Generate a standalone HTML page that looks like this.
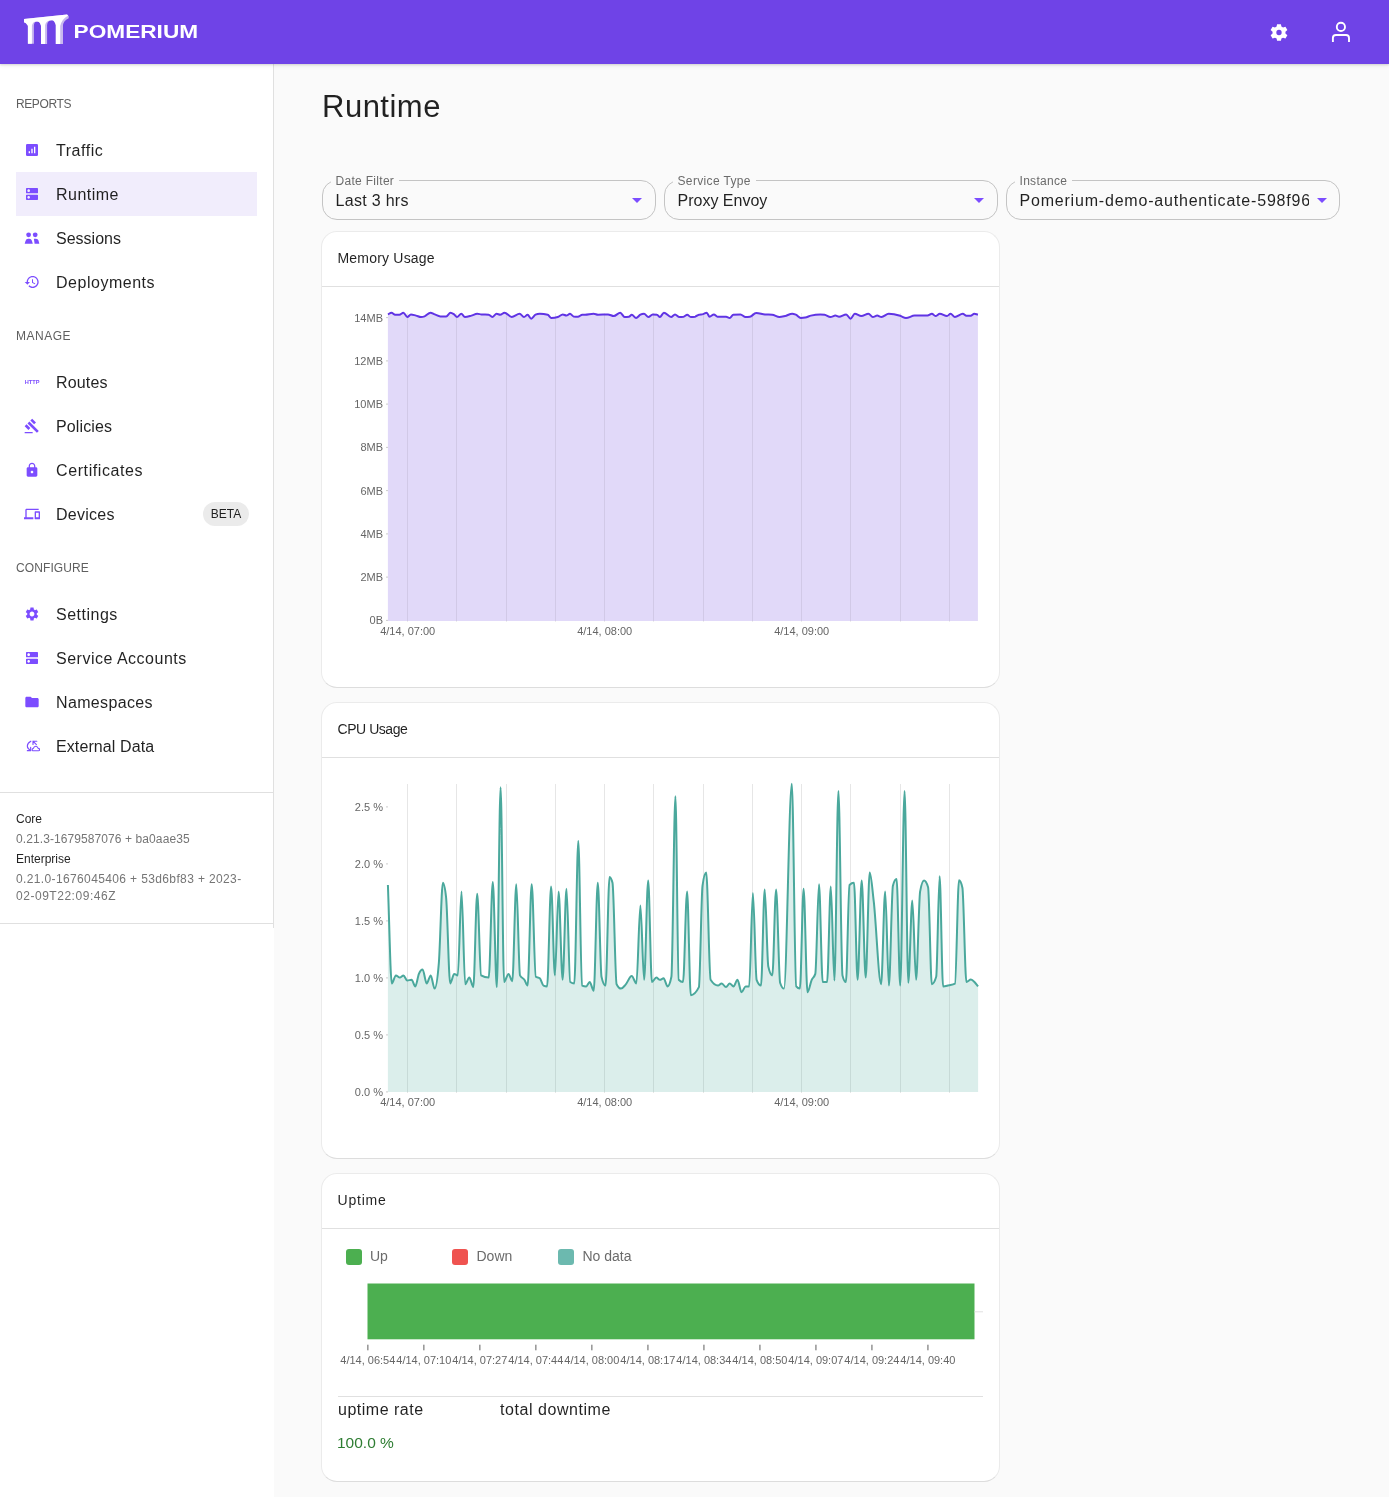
<!DOCTYPE html>
<html><head><meta charset="utf-8">
<style>
*{box-sizing:border-box;margin:0;padding:0}
html,body{width:1389px;height:1497px;overflow:hidden;background:#fff;font-family:"Liberation Sans",sans-serif;color:rgba(0,0,0,0.87)}
#wrap{position:absolute;left:0;top:0;width:1389px;height:1497px;will-change:transform;background:#fff}
.abs{position:absolute}
#main{position:absolute;left:274px;top:64px;width:1115px;height:1433px;background:#fafafa}
#hdr{position:absolute;left:0;top:0;width:1389px;height:64px;background:#6F43E7;box-shadow:0 1px 2px rgba(0,0,0,0.13),0 2px 5px rgba(0,0,0,0.06);z-index:5}
#side{position:absolute;left:0;top:64px;width:274px;height:864px;background:#fff;border-right:1px solid #e0e0e0}
.sec{position:absolute;left:16px;font-size:12px;color:#5f5f5f;letter-spacing:0.1px;line-height:14px}
.item{position:absolute;left:16px;width:241px;height:44px}
.item.sel{background:#f1edfc}
.item svg{position:absolute;left:8px;top:14px;width:16px;height:16px}
.item span{position:absolute;left:40px;top:1px;line-height:44px;font-size:16px;color:rgba(0,0,0,0.87);white-space:nowrap}
.chip{position:absolute;left:187px;top:10px;width:46px;height:24px;border-radius:12px;background:#ebebeb;font-size:12px;line-height:25px;text-align:center;color:rgba(0,0,0,0.87)}
.ver{position:absolute;left:16px;font-size:12px;white-space:nowrap}
.field{position:absolute;top:180px;height:40px;border:1px solid #c4c4c4;border-radius:15px;width:334px;background:#fafafa}
.field .lab{position:absolute;top:-7.5px;left:7.5px;padding:0 5px;letter-spacing:.1px;background:#fafafa;font-size:12px;line-height:14px;color:#6b6b6b;white-space:nowrap}
.field .val{position:absolute;left:12.5px;top:11px;font-size:16px;line-height:18px;white-space:nowrap;overflow:hidden;color:rgba(0,0,0,0.87)}
.field .arr{position:absolute;top:17px;width:0;height:0;border-left:5px solid transparent;border-right:5px solid transparent;border-top:5px solid #7C4DFF}
.card{position:absolute;left:321px;width:679px;background:#fff;border:1px solid #ebebeb;border-bottom-color:#dddddd;border-radius:16px}
.card .ttl{position:absolute;left:15.5px;top:18px;font-size:14px;line-height:16px;color:rgba(0,0,0,0.87)}
.card .dv{position:absolute;left:0;right:0;top:54px;height:1px;background:#e0e0e0}
svg.full{position:absolute;left:0;top:0;width:1389px;height:1497px;z-index:3;pointer-events:none}
.ax{font-family:"Liberation Sans",sans-serif;font-size:11px;fill:#666}
</style></head><body><div id="wrap">
<div id="main"></div>
<div id="hdr">
  <svg class="abs" style="left:0;top:0" width="220" height="64" viewBox="0 0 220 64">
    <path d="M24,19 L67,14.4 L68.7,16 L68.7,18.3 Q63,21 63,26 L63,44 L55.8,44 L55.8,25 Q54.5,20.3 52,20.3 Q47.5,20.3 47.1,25 L47.1,44 L41,44 L41,25.8 Q40,21.5 37,21.5 Q34,21.5 33.9,25.8 L33.9,43.7 L27.9,43.7 L27.9,25.8 Q26,22.3 24,22.3 Z" fill="#c8b8ef"/>
    <path d="M24,19 L67,14.4 L68.2,15.6 Q62,19 60.2,26 L60.2,44 L55.8,44 L55.8,25 Q54.5,20.3 52,20.3 Q46,20.3 45.1,25 L45.1,44 L41,44 L41,25.8 Q40,21.5 37,21.5 Q32.5,21.5 31.9,25.8 L31.9,43.7 L27.9,43.7 L27.9,25.8 Q26,22.3 24,22.3 Z" fill="#fff"/>
    <text x="73.6" y="37.9" font-family="Liberation Sans" font-weight="bold" font-size="17.6" fill="#fff" textLength="124.5" lengthAdjust="spacingAndGlyphs">POMERIUM</text>
  </svg>
  <svg class="abs" style="left:1266px;top:20px" width="26" height="26" viewBox="0 0 26 26">
    <path fill="#fff" fill-rule="evenodd" d="M10.9,3.9 L15.1,3.9 L15.6,6.6 L17.4,7.6 L20,6.7 L22.1,10.3 L20,12.1 L20,14.1 L22.1,15.9 L20,19.5 L17.4,18.6 L15.6,19.6 L15.1,22.1 L10.9,22.1 L10.4,19.6 L8.6,18.6 L6,19.5 L3.9,15.9 L6,14.1 L6,12.1 L3.9,10.3 L6,6.7 L8.6,7.6 L10.4,6.6 Z M13,10.1 A2.9,2.9 0 1,0 13,15.9 A2.9,2.9 0 1,0 13,10.1 Z" transform="translate(13,12.5) scale(0.92) translate(-13,-13)"/>
  </svg>
  <svg class="abs" style="left:1326px;top:15px" width="30" height="30" viewBox="0 0 30 30">
    <circle cx="14.9" cy="11.9" r="4.1" fill="none" stroke="#fff" stroke-width="1.9"/>
    <path d="M6.9,27 L6.9,23 Q6.9,20 10,20 L20,20 Q23,20 23,23 L23,27" fill="none" stroke="#fff" stroke-width="1.9"/>
  </svg>
</div>

<div id="side">
  <div class="sec" style="top:33px;letter-spacing:-.4px">REPORTS</div>
  <div class="item" style="top:64px"><svg viewBox="0 0 24 24"><rect x="3" y="3" width="18" height="18" rx="2" fill="#7C4DFF"/><path d="M7 17h2v-3H7zM11 17h2V10h-2zM15 17h2V7h-2z" fill="#fff"/></svg><span style="letter-spacing:.55px">Traffic</span></div>
  <div class="item sel" style="top:108px"><svg viewBox="0 0 24 24"><path fill="#7C4DFF" d="M20 13H4c-.55 0-1 .45-1 1v6c0 .55.45 1 1 1h16c.55 0 1-.45 1-1v-6c0-.55-.45-1-1-1zM7 19c-1.1 0-2-.9-2-2s.9-2 2-2 2 .9 2 2-.9 2-2 2zM20 3H4c-.55 0-1 .45-1 1v6c0 .55.45 1 1 1h16c.55 0 1-.45 1-1V4c0-.55-.45-1-1-1zM7 9c-1.1 0-2-.9-2-2s.9-2 2-2 2 .9 2 2-.9 2-2 2z"/></svg><span style="letter-spacing:.48px">Runtime</span></div>
  <div class="item" style="top:152px"><svg viewBox="0 0 16 16"><g fill="#7C4DFF"><circle cx="4.6" cy="4.8" r="2.4"/><circle cx="11.2" cy="4.8" r="2.4"/><path d="M0.7,13.7 L1.5,11 Q2.1,8.7 4.2,8.7 L5.4,8.7 Q7.3,8.7 7.9,10.8 L8.8,13.7 Z"/><path d="M9.9,8.8 L12,8.7 Q14,8.7 14.6,10.7 L15.3,13.7 L10.6,13.7 Z"/></g></svg><span>Sessions</span></div>
  <div class="item" style="top:196px"><svg viewBox="0 0 24 24"><path fill="#7C4DFF" d="M13 3c-4.97 0-9 4.03-9 9H1l3.89 3.89.07.14L9 12H6c0-3.87 3.13-7 7-7s7 3.13 7 7-3.13 7-7 7c-1.93 0-3.68-.79-4.94-2.06l-1.42 1.42C8.27 19.99 10.51 21 13 21c4.97 0 9-4.03 9-9s-4.03-9-9-9zm-1 5v5l4.28 2.54.72-1.21-3.5-2.08V8H12z"/></svg><span style="letter-spacing:.52px">Deployments</span></div>

  <div class="sec" style="top:265px;letter-spacing:.5px">MANAGE</div>
  <div class="item" style="top:296px"><svg viewBox="0 0 24 24"><text x="1.1" y="14.9" font-family="Liberation Sans" font-weight="bold" font-size="9.4" fill="#7C4DFF" textLength="22" lengthAdjust="spacingAndGlyphs">HTTP</text></svg><span style="letter-spacing:.15px">Routes</span></div>
  <div class="item" style="top:340px"><svg viewBox="0 0 24 24"><path fill="#7C4DFF" d="M1 21h12v2H1zM5.245 8.07l2.83-2.827 14.14 14.142-2.828 2.828zM12.317 1l5.657 5.656-2.83 2.83-5.654-5.66zM3.825 9.485l5.657 5.657-2.828 2.828-5.657-5.657z"/></svg><span style="letter-spacing:.12px">Policies</span></div>
  <div class="item" style="top:384px"><svg viewBox="0 0 24 24"><path fill="#7C4DFF" d="M18 8h-1V6c0-2.76-2.24-5-5-5S7 3.24 7 6v2H6c-1.1 0-2 .9-2 2v10c0 1.1.9 2 2 2h12c1.1 0 2-.9 2-2V10c0-1.1-.9-2-2-2zm-6 9c-1.1 0-2-.9-2-2s.9-2 2-2 2 .9 2 2-.9 2-2 2zm3.1-9H8.9V6c0-1.71 1.39-3.1 3.1-3.1 1.71 0 3.1 1.39 3.1 3.1v2z"/></svg><span style="letter-spacing:.6px">Certificates</span></div>
  <div class="item" style="top:428px"><svg viewBox="0 0 24 24"><path fill="#7C4DFF" d="M4 6h18V4H4c-1.1 0-2 .9-2 2v11H0v3h14v-3H4V6zm19 2h-6c-.55 0-1 .45-1 1v10c0 .55.45 1 1 1h6c.55 0 1-.45 1-1V9c0-.55-.45-1-1-1zm-1 9h-4v-7h4v7z"/></svg><span style="letter-spacing:.25px">Devices</span><div class="chip">BETA</div></div>

  <div class="sec" style="top:497px">CONFIGURE</div>
  <div class="item" style="top:528px"><svg viewBox="0 0 24 24"><path fill="#7C4DFF" d="M19.14 12.94c.04-.3.06-.61.06-.94 0-.32-.02-.64-.07-.94l2.03-1.58c.18-.14.23-.41.12-.61l-1.92-3.32c-.12-.22-.37-.29-.59-.22l-2.39.96c-.5-.38-1.03-.7-1.62-.94l-.36-2.54c-.04-.24-.24-.41-.48-.41h-3.84c-.24 0-.43.17-.47.41l-.36 2.54c-.59.24-1.13.57-1.62.94l-2.39-.96c-.22-.08-.47 0-.59.22L2.74 8.87c-.12.21-.08.47.12.61l2.03 1.58c-.05.3-.09.63-.09.94s.02.64.07.94l-2.03 1.58c-.18.14-.23.41-.12.61l1.92 3.32c.12.22.37.29.59.22l2.39-.96c.5.38 1.03.7 1.62.94l.36 2.54c.05.24.24.41.48.41h3.84c.24 0 .44-.17.47-.41l.36-2.54c.59-.24 1.13-.56 1.62-.94l2.39.96c.22.08.47 0 .59-.22l1.92-3.32c.12-.22.07-.47-.12-.61l-2.01-1.58zM12 15.6c-1.98 0-3.6-1.62-3.6-3.6s1.62-3.6 3.6-3.6 3.6 1.62 3.6 3.6-1.62 3.6-3.6 3.6z"/></svg><span style="letter-spacing:.5px">Settings</span></div>
  <div class="item" style="top:572px"><svg viewBox="0 0 24 24"><path fill="#7C4DFF" d="M20 13H4c-.55 0-1 .45-1 1v6c0 .55.45 1 1 1h16c.55 0 1-.45 1-1v-6c0-.55-.45-1-1-1zM7 19c-1.1 0-2-.9-2-2s.9-2 2-2 2 .9 2 2-.9 2-2 2zM20 3H4c-.55 0-1 .45-1 1v6c0 .55.45 1 1 1h16c.55 0 1-.45 1-1V4c0-.55-.45-1-1-1zM7 9c-1.1 0-2-.9-2-2s.9-2 2-2 2 .9 2 2-.9 2-2 2z"/></svg><span style="letter-spacing:.5px">Service Accounts</span></div>
  <div class="item" style="top:616px"><svg viewBox="0 0 24 24"><path fill="#7C4DFF" d="M10 4H4c-1.1 0-1.99.9-1.99 2L2 18c0 1.1.9 2 2 2h16c1.1 0 2-.9 2-2V8c0-1.1-.9-2-2-2h-8l-2-2z"/></svg><span style="letter-spacing:.35px">Namespaces</span></div>
  <div class="item" style="top:660px"><svg viewBox="0 0 24 24"><g fill="none" stroke="#7C4DFF" stroke-width="1.7" stroke-linecap="round" stroke-linejoin="round"><path d="M10.3 4.8 Q5 7.5 5 12 Q5 15.8 9.8 18.6"/><path d="M5 19 H10 V14"/><path d="M19.2 4.8 H13.5 V9.6 M13.5 4.8 L18.6 9.8"/><path d="M13.2 19.2 H21.8 Q23.4 19.2 23.4 17.5 Q23.4 15.8 21.3 15.6 Q20.3 12.3 17.6 12.3 Q15 12.3 14 15.6 Q12.2 16 12.2 17.6 Q12.2 19.2 13.2 19.2Z"/></g></svg><span style="letter-spacing:.1px">External Data</span></div>

  <div class="abs" style="left:0;top:728px;width:273px;height:1px;background:#e0e0e0"></div>
  <div class="ver" style="top:745px;line-height:20px;color:rgba(0,0,0,0.87)">Core</div>
  <div class="ver" style="top:765px;line-height:20px;color:#757575;letter-spacing:.09px">0.21.3-1679587076 + ba0aae35</div>
  <div class="ver" style="top:785px;line-height:20px;color:rgba(0,0,0,0.87)">Enterprise</div>
  <div class="ver" style="top:807px;line-height:17px;color:#757575;letter-spacing:.37px">0.21.0-1676045406 + 53d6bf83 + 2023-</div><div class="ver" style="top:824px;line-height:17px;color:#757575;letter-spacing:.53px">02-09T22:09:46Z</div>
  <div class="abs" style="left:0;top:859px;width:273px;height:1px;background:#e0e0e0"></div>
</div>

<div class="abs" style="left:322px;top:91px;font-size:31px;line-height:31px;letter-spacing:.5px;color:rgba(0,0,0,0.87)">Runtime</div>

<div class="field" style="left:322px"><div class="lab" style="letter-spacing:.3px">Date Filter</div><div class="val" style="width:290px;letter-spacing:.3px">Last 3 hrs</div><div class="arr" style="left:309px"></div></div>
<div class="field" style="left:664px"><div class="lab" style="letter-spacing:.35px">Service Type</div><div class="val" style="width:290px">Proxy Envoy</div><div class="arr" style="left:309px"></div></div>
<div class="field" style="left:1006px"><div class="lab" style="letter-spacing:.3px">Instance</div><div class="val" style="width:289px;letter-spacing:.8px">Pomerium-demo-authenticate-598f96ab7d</div><div class="arr" style="left:310px"></div></div>

<div class="card" style="top:231px;height:457px"><div class="ttl" style="letter-spacing:.2px">Memory Usage</div><div class="dv"></div></div>
<div class="card" style="top:702px;height:457px"><div class="ttl" style="letter-spacing:-.45px">CPU Usage</div><div class="dv"></div></div>
<div class="card" style="top:1173px;height:309px"><div class="ttl" style="letter-spacing:.8px">Uptime</div><div class="dv"></div>
  <div class="abs" style="left:24px;top:75px;width:16px;height:16px;border-radius:3px;background:#4caf50"></div>
  <div class="abs" style="left:48px;top:74px;font-size:14px;line-height:16px;color:#6b6b6b">Up</div>
  <div class="abs" style="left:130px;top:75px;width:16px;height:16px;border-radius:3px;background:#ef5350"></div>
  <div class="abs" style="left:154.5px;top:74px;font-size:14px;line-height:16px;color:#6b6b6b">Down</div>
  <div class="abs" style="left:236px;top:75px;width:16px;height:16px;border-radius:3px;background:#6cb9af"></div>
  <div class="abs" style="left:260.5px;top:74px;font-size:14px;line-height:16px;color:#6b6b6b">No data</div>
  <div class="abs" style="left:16px;top:222px;width:645px;height:1px;background:#e0e0e0"></div>
  <div class="abs" style="left:16px;top:226px;font-size:16px;line-height:20px;letter-spacing:.5px">uptime rate</div>
  <div class="abs" style="left:178px;top:226px;font-size:16px;line-height:20px;letter-spacing:.55px">total downtime</div>
  <div class="abs" style="left:15px;top:259px;font-size:15.5px;line-height:20px;color:#2e7d32">100.0 %</div>
</div>

<svg class="full" viewBox="0 0 1389 1497">
<path d="M387.9,314.4 C389.1,313.8 390.3,312.7 391.5,312.7 C392.7,312.7 393.9,314.7 395.1,314.7 C396.5,314.7 398.0,314.7 399.4,314.7 C400.7,314.7 402.1,312.7 403.4,312.7 C404.7,312.7 406.0,317.0 407.3,317.0 C408.5,317.0 409.7,314.4 410.9,314.4 C412.6,314.4 414.3,315.2 416.0,315.6 C417.7,316.0 419.3,317.0 421.0,317.0 C422.2,317.0 423.4,316.8 424.6,316.4 C426.5,315.8 428.5,312.7 430.4,312.7 C431.8,312.7 433.3,313.9 434.7,314.4 C436.6,315.1 438.5,316.4 440.4,316.4 C442.3,316.4 444.3,316.4 446.2,316.4 C447.6,316.4 449.1,312.7 450.5,312.7 C451.7,312.7 452.9,313.6 454.1,314.4 C455.1,315.1 456.0,317.0 457.0,317.0 C458.4,317.0 459.9,313.8 461.3,313.8 C462.5,313.8 463.7,317.0 464.9,317.0 C467.1,317.0 469.2,316.2 471.4,315.6 C473.3,315.1 475.3,313.8 477.2,313.8 C478.6,313.8 480.1,314.3 481.5,314.4 C483.9,314.6 486.3,314.5 488.7,314.7 C489.9,314.8 491.1,317.0 492.3,317.0 C493.7,317.0 495.2,313.8 496.6,313.8 C497.8,313.8 499.0,314.7 500.2,314.7 C501.6,314.7 503.1,312.7 504.5,312.7 C506.9,312.7 509.3,317.0 511.7,317.0 C514.3,317.0 517.0,313.8 519.6,313.8 C521.1,313.8 522.5,317.0 524.0,317.0 C525.2,317.0 526.4,314.7 527.6,314.7 C528.8,314.7 530.0,318.7 531.2,318.7 C532.6,318.7 534.1,315.3 535.5,314.7 C536.9,314.1 538.4,313.8 539.8,313.8 C542.4,313.8 545.1,314.1 547.7,314.7 C548.9,315.0 550.1,318.0 551.3,318.0 C553.5,318.0 555.6,317.7 557.8,317.0 C559.5,316.5 561.1,314.4 562.8,314.4 C564.0,314.4 565.2,315.6 566.4,315.6 C567.6,315.6 568.8,313.8 570.0,313.8 C571.2,313.8 572.4,316.2 573.6,316.4 C575.0,316.6 576.5,316.7 577.9,316.7 C579.4,316.7 580.8,314.7 582.3,314.7 C583.2,314.7 584.1,314.7 585.0,314.7 C587.9,314.7 590.7,313.7 593.6,313.7 C595.1,313.7 596.5,314.7 598.0,314.7 C601.3,314.7 604.7,314.4 608.0,314.4 C609.9,314.4 611.9,316.1 613.8,316.1 C616.0,316.1 618.1,312.7 620.3,312.7 C621.7,312.7 623.2,317.0 624.6,317.0 C626.0,317.0 627.5,316.9 628.9,316.7 C629.9,316.6 630.8,314.7 631.8,314.7 C633.2,314.7 634.7,318.0 636.1,318.0 C637.5,318.0 639.0,315.4 640.4,314.7 C641.6,314.1 642.8,313.8 644.0,313.8 C645.5,313.8 646.9,317.0 648.4,317.0 C649.8,317.0 651.3,314.4 652.7,314.4 C654.1,314.4 655.6,314.5 657.0,314.7 C658.0,314.8 658.9,317.0 659.9,317.0 C661.2,317.0 662.6,312.7 663.9,312.7 C666.3,312.7 668.7,317.0 671.1,317.0 C672.4,317.0 673.7,314.4 675.0,314.4 C676.4,314.4 677.9,317.0 679.3,317.0 C680.7,317.0 682.2,316.9 683.6,316.7 C684.8,316.5 686.0,314.7 687.2,314.7 C688.4,314.7 689.6,317.0 690.8,317.0 C692.2,317.0 693.7,316.9 695.1,316.7 C696.3,316.5 697.6,315.0 698.8,314.7 C700.2,314.3 701.7,314.5 703.1,314.1 C704.3,313.8 705.5,312.7 706.7,312.7 C707.7,312.7 708.6,316.7 709.6,316.7 C711.0,316.7 712.5,314.4 713.9,314.4 C715.1,314.4 716.3,316.7 717.5,316.7 C720.4,316.7 723.2,316.7 726.1,316.7 C727.3,316.7 728.5,318.0 729.7,318.0 C730.9,318.0 732.1,314.8 733.3,314.7 C735.7,314.5 738.1,314.4 740.5,314.4 C742.2,314.4 743.8,317.0 745.5,317.0 C747.0,317.0 748.4,316.9 749.9,316.7 C752.0,316.4 754.2,313.0 756.3,313.0 C759.2,313.0 762.1,314.2 765.0,314.4 C767.4,314.6 769.8,314.5 772.2,314.7 C774.6,314.9 777.0,317.0 779.4,317.0 C781.3,317.0 783.1,316.5 785.0,316.1 C787.4,315.5 789.8,313.7 792.2,313.7 C793.4,313.7 794.6,314.2 795.8,314.7 C797.5,315.4 799.1,318.0 800.8,318.0 C802.3,318.0 803.7,317.9 805.2,317.6 C807.1,317.3 809.0,316.1 810.9,315.6 C814.0,314.8 817.2,314.4 820.3,314.4 C821.7,314.4 823.2,314.5 824.6,314.7 C826.5,315.0 828.5,317.0 830.4,317.0 C832.1,317.0 833.7,315.6 835.4,315.6 C836.6,315.6 837.8,316.7 839.0,316.7 C841.4,316.7 843.8,314.4 846.2,314.4 C847.6,314.4 849.1,318.7 850.5,318.7 C851.9,318.7 853.4,313.7 854.8,313.7 C857.0,313.7 859.1,316.1 861.3,316.1 C863.7,316.1 866.1,313.8 868.5,313.8 C869.9,313.8 871.4,317.0 872.8,317.0 C874.3,317.0 875.7,315.6 877.2,315.6 C878.6,315.6 880.1,317.0 881.5,317.0 C883.9,317.0 886.3,313.7 888.7,313.7 C892.5,313.7 896.4,314.6 900.2,315.8 C902.1,316.4 904.1,318.0 906.0,318.0 C908.9,318.0 911.7,315.6 914.6,315.6 C918.9,315.6 923.2,315.6 927.5,315.6 C929.0,315.6 930.4,313.7 931.9,313.7 C933.1,313.7 934.3,316.1 935.5,316.1 C936.9,316.1 938.4,313.8 939.8,313.8 C942.2,313.8 944.6,316.1 947.0,316.1 C948.2,316.1 949.4,313.7 950.6,313.7 C952.0,313.7 953.5,317.0 954.9,317.0 C957.5,317.0 960.2,313.8 962.8,313.8 C964.0,313.8 965.2,315.8 966.4,315.8 C967.8,315.8 969.3,315.8 970.7,315.8 C971.9,315.8 973.1,313.7 974.3,313.7 C975.5,313.7 976.7,314.4 977.9,314.7 L977.9,621 L387.9,621 Z" fill="#e1d9f9"/>
<line x1="407.5" y1="313" x2="407.5" y2="622" stroke="rgba(0,0,0,0.07)" stroke-width="1"/>
<line x1="456.5" y1="313" x2="456.5" y2="622" stroke="rgba(0,0,0,0.07)" stroke-width="1"/>
<line x1="506.5" y1="313" x2="506.5" y2="622" stroke="rgba(0,0,0,0.07)" stroke-width="1"/>
<line x1="555.5" y1="313" x2="555.5" y2="622" stroke="rgba(0,0,0,0.07)" stroke-width="1"/>
<line x1="604.5" y1="313" x2="604.5" y2="622" stroke="rgba(0,0,0,0.07)" stroke-width="1"/>
<line x1="653.5" y1="313" x2="653.5" y2="622" stroke="rgba(0,0,0,0.07)" stroke-width="1"/>
<line x1="703.5" y1="313" x2="703.5" y2="622" stroke="rgba(0,0,0,0.07)" stroke-width="1"/>
<line x1="752.5" y1="313" x2="752.5" y2="622" stroke="rgba(0,0,0,0.07)" stroke-width="1"/>
<line x1="801.5" y1="313" x2="801.5" y2="622" stroke="rgba(0,0,0,0.07)" stroke-width="1"/>
<line x1="850.5" y1="313" x2="850.5" y2="622" stroke="rgba(0,0,0,0.07)" stroke-width="1"/>
<line x1="900.5" y1="313" x2="900.5" y2="622" stroke="rgba(0,0,0,0.07)" stroke-width="1"/>
<line x1="949.5" y1="313" x2="949.5" y2="622" stroke="rgba(0,0,0,0.07)" stroke-width="1"/>
<path d="M387.9,314.4 C389.1,313.8 390.3,312.7 391.5,312.7 C392.7,312.7 393.9,314.7 395.1,314.7 C396.5,314.7 398.0,314.7 399.4,314.7 C400.7,314.7 402.1,312.7 403.4,312.7 C404.7,312.7 406.0,317.0 407.3,317.0 C408.5,317.0 409.7,314.4 410.9,314.4 C412.6,314.4 414.3,315.2 416.0,315.6 C417.7,316.0 419.3,317.0 421.0,317.0 C422.2,317.0 423.4,316.8 424.6,316.4 C426.5,315.8 428.5,312.7 430.4,312.7 C431.8,312.7 433.3,313.9 434.7,314.4 C436.6,315.1 438.5,316.4 440.4,316.4 C442.3,316.4 444.3,316.4 446.2,316.4 C447.6,316.4 449.1,312.7 450.5,312.7 C451.7,312.7 452.9,313.6 454.1,314.4 C455.1,315.1 456.0,317.0 457.0,317.0 C458.4,317.0 459.9,313.8 461.3,313.8 C462.5,313.8 463.7,317.0 464.9,317.0 C467.1,317.0 469.2,316.2 471.4,315.6 C473.3,315.1 475.3,313.8 477.2,313.8 C478.6,313.8 480.1,314.3 481.5,314.4 C483.9,314.6 486.3,314.5 488.7,314.7 C489.9,314.8 491.1,317.0 492.3,317.0 C493.7,317.0 495.2,313.8 496.6,313.8 C497.8,313.8 499.0,314.7 500.2,314.7 C501.6,314.7 503.1,312.7 504.5,312.7 C506.9,312.7 509.3,317.0 511.7,317.0 C514.3,317.0 517.0,313.8 519.6,313.8 C521.1,313.8 522.5,317.0 524.0,317.0 C525.2,317.0 526.4,314.7 527.6,314.7 C528.8,314.7 530.0,318.7 531.2,318.7 C532.6,318.7 534.1,315.3 535.5,314.7 C536.9,314.1 538.4,313.8 539.8,313.8 C542.4,313.8 545.1,314.1 547.7,314.7 C548.9,315.0 550.1,318.0 551.3,318.0 C553.5,318.0 555.6,317.7 557.8,317.0 C559.5,316.5 561.1,314.4 562.8,314.4 C564.0,314.4 565.2,315.6 566.4,315.6 C567.6,315.6 568.8,313.8 570.0,313.8 C571.2,313.8 572.4,316.2 573.6,316.4 C575.0,316.6 576.5,316.7 577.9,316.7 C579.4,316.7 580.8,314.7 582.3,314.7 C583.2,314.7 584.1,314.7 585.0,314.7 C587.9,314.7 590.7,313.7 593.6,313.7 C595.1,313.7 596.5,314.7 598.0,314.7 C601.3,314.7 604.7,314.4 608.0,314.4 C609.9,314.4 611.9,316.1 613.8,316.1 C616.0,316.1 618.1,312.7 620.3,312.7 C621.7,312.7 623.2,317.0 624.6,317.0 C626.0,317.0 627.5,316.9 628.9,316.7 C629.9,316.6 630.8,314.7 631.8,314.7 C633.2,314.7 634.7,318.0 636.1,318.0 C637.5,318.0 639.0,315.4 640.4,314.7 C641.6,314.1 642.8,313.8 644.0,313.8 C645.5,313.8 646.9,317.0 648.4,317.0 C649.8,317.0 651.3,314.4 652.7,314.4 C654.1,314.4 655.6,314.5 657.0,314.7 C658.0,314.8 658.9,317.0 659.9,317.0 C661.2,317.0 662.6,312.7 663.9,312.7 C666.3,312.7 668.7,317.0 671.1,317.0 C672.4,317.0 673.7,314.4 675.0,314.4 C676.4,314.4 677.9,317.0 679.3,317.0 C680.7,317.0 682.2,316.9 683.6,316.7 C684.8,316.5 686.0,314.7 687.2,314.7 C688.4,314.7 689.6,317.0 690.8,317.0 C692.2,317.0 693.7,316.9 695.1,316.7 C696.3,316.5 697.6,315.0 698.8,314.7 C700.2,314.3 701.7,314.5 703.1,314.1 C704.3,313.8 705.5,312.7 706.7,312.7 C707.7,312.7 708.6,316.7 709.6,316.7 C711.0,316.7 712.5,314.4 713.9,314.4 C715.1,314.4 716.3,316.7 717.5,316.7 C720.4,316.7 723.2,316.7 726.1,316.7 C727.3,316.7 728.5,318.0 729.7,318.0 C730.9,318.0 732.1,314.8 733.3,314.7 C735.7,314.5 738.1,314.4 740.5,314.4 C742.2,314.4 743.8,317.0 745.5,317.0 C747.0,317.0 748.4,316.9 749.9,316.7 C752.0,316.4 754.2,313.0 756.3,313.0 C759.2,313.0 762.1,314.2 765.0,314.4 C767.4,314.6 769.8,314.5 772.2,314.7 C774.6,314.9 777.0,317.0 779.4,317.0 C781.3,317.0 783.1,316.5 785.0,316.1 C787.4,315.5 789.8,313.7 792.2,313.7 C793.4,313.7 794.6,314.2 795.8,314.7 C797.5,315.4 799.1,318.0 800.8,318.0 C802.3,318.0 803.7,317.9 805.2,317.6 C807.1,317.3 809.0,316.1 810.9,315.6 C814.0,314.8 817.2,314.4 820.3,314.4 C821.7,314.4 823.2,314.5 824.6,314.7 C826.5,315.0 828.5,317.0 830.4,317.0 C832.1,317.0 833.7,315.6 835.4,315.6 C836.6,315.6 837.8,316.7 839.0,316.7 C841.4,316.7 843.8,314.4 846.2,314.4 C847.6,314.4 849.1,318.7 850.5,318.7 C851.9,318.7 853.4,313.7 854.8,313.7 C857.0,313.7 859.1,316.1 861.3,316.1 C863.7,316.1 866.1,313.8 868.5,313.8 C869.9,313.8 871.4,317.0 872.8,317.0 C874.3,317.0 875.7,315.6 877.2,315.6 C878.6,315.6 880.1,317.0 881.5,317.0 C883.9,317.0 886.3,313.7 888.7,313.7 C892.5,313.7 896.4,314.6 900.2,315.8 C902.1,316.4 904.1,318.0 906.0,318.0 C908.9,318.0 911.7,315.6 914.6,315.6 C918.9,315.6 923.2,315.6 927.5,315.6 C929.0,315.6 930.4,313.7 931.9,313.7 C933.1,313.7 934.3,316.1 935.5,316.1 C936.9,316.1 938.4,313.8 939.8,313.8 C942.2,313.8 944.6,316.1 947.0,316.1 C948.2,316.1 949.4,313.7 950.6,313.7 C952.0,313.7 953.5,317.0 954.9,317.0 C957.5,317.0 960.2,313.8 962.8,313.8 C964.0,313.8 965.2,315.8 966.4,315.8 C967.8,315.8 969.3,315.8 970.7,315.8 C971.9,315.8 973.1,313.7 974.3,313.7 C975.5,313.7 976.7,314.4 977.9,314.7" fill="none" stroke="#6034e4" stroke-width="2" stroke-linejoin="round"/>
<text x="383" y="321.5" class="ax" text-anchor="end">14MB</text>
<rect x="386" y="317.1" width="2" height="1" fill="#ccc"/>
<text x="383" y="364.8" class="ax" text-anchor="end">12MB</text>
<rect x="386" y="360.4" width="2" height="1" fill="#ccc"/>
<text x="383" y="408.0" class="ax" text-anchor="end">10MB</text>
<rect x="386" y="403.6" width="2" height="1" fill="#ccc"/>
<text x="383" y="451.2" class="ax" text-anchor="end">8MB</text>
<rect x="386" y="446.9" width="2" height="1" fill="#ccc"/>
<text x="383" y="494.5" class="ax" text-anchor="end">6MB</text>
<rect x="386" y="490.1" width="2" height="1" fill="#ccc"/>
<text x="383" y="537.8" class="ax" text-anchor="end">4MB</text>
<rect x="386" y="533.4" width="2" height="1" fill="#ccc"/>
<text x="383" y="581.0" class="ax" text-anchor="end">2MB</text>
<rect x="386" y="576.6" width="2" height="1" fill="#ccc"/>
<text x="383" y="624.2" class="ax" text-anchor="end">0B</text>
<rect x="386" y="619.9" width="2" height="1" fill="#ccc"/>
<text x="407.7" y="635" class="ax" text-anchor="middle">4/14, 07:00</text>
<text x="604.7" y="635" class="ax" text-anchor="middle">4/14, 08:00</text>
<text x="801.7" y="635" class="ax" text-anchor="middle">4/14, 09:00</text>
<line x1="407.5" y1="784" x2="407.5" y2="1093" stroke="#e6e6e6" stroke-width="1"/>
<line x1="456.5" y1="784" x2="456.5" y2="1093" stroke="#e6e6e6" stroke-width="1"/>
<line x1="506.5" y1="784" x2="506.5" y2="1093" stroke="#e6e6e6" stroke-width="1"/>
<line x1="555.5" y1="784" x2="555.5" y2="1093" stroke="#e6e6e6" stroke-width="1"/>
<line x1="604.5" y1="784" x2="604.5" y2="1093" stroke="#e6e6e6" stroke-width="1"/>
<line x1="653.5" y1="784" x2="653.5" y2="1093" stroke="#e6e6e6" stroke-width="1"/>
<line x1="703.5" y1="784" x2="703.5" y2="1093" stroke="#e6e6e6" stroke-width="1"/>
<line x1="752.5" y1="784" x2="752.5" y2="1093" stroke="#e6e6e6" stroke-width="1"/>
<line x1="801.5" y1="784" x2="801.5" y2="1093" stroke="#e6e6e6" stroke-width="1"/>
<line x1="850.5" y1="784" x2="850.5" y2="1093" stroke="#e6e6e6" stroke-width="1"/>
<line x1="900.5" y1="784" x2="900.5" y2="1093" stroke="#e6e6e6" stroke-width="1"/>
<line x1="949.5" y1="784" x2="949.5" y2="1093" stroke="#e6e6e6" stroke-width="1"/>
<path d="M387.9,885.0 C389.2,917.8 390.5,983.4 391.8,983.4 C393.2,983.4 394.5,975.4 395.9,975.4 C397.2,975.4 398.5,977.6 399.8,977.6 C401.0,977.6 402.3,975.4 403.5,975.4 C404.7,975.4 406.0,980.5 407.2,980.5 C408.7,980.5 410.1,979.8 411.6,979.8 C412.8,979.8 414.1,986.4 415.3,986.4 C416.5,986.4 417.7,976.7 418.9,973.9 C420.1,971.0 421.4,969.5 422.6,969.5 C424.0,969.5 425.3,983.4 426.7,983.4 C428.0,983.4 429.4,975.4 430.7,975.4 C432.0,975.4 433.3,988.6 434.6,988.6 C436.0,988.6 437.4,980.3 438.8,963.6 C440.2,947.3 441.5,882.8 442.9,882.8 C444.0,882.8 445.0,887.7 446.1,897.5 C447.5,910.1 448.8,983.4 450.2,983.4 C451.5,983.4 452.9,973.9 454.2,973.9 C455.4,973.9 456.6,975.4 457.8,975.4 C459.0,975.4 460.3,891.6 461.5,891.6 C462.7,891.6 464.0,984.2 465.2,984.2 C466.6,984.2 467.9,977.6 469.3,977.6 C470.6,977.6 472.0,987.1 473.3,987.1 C474.6,987.1 475.9,893.8 477.2,893.8 C478.5,893.8 479.8,974.6 481.1,975.4 C483.6,976.9 486.2,977.6 488.7,977.6 C490.1,977.6 491.4,882.1 492.8,882.1 C494.1,882.1 495.5,987.1 496.8,987.1 C498.1,987.1 499.3,787.3 500.6,787.3 C501.8,787.3 502.9,982.0 504.1,982.0 C505.6,982.0 507.0,973.9 508.5,973.9 C509.8,973.9 511.0,981.2 512.3,981.2 C513.6,981.2 515.0,884.3 516.3,884.3 C517.5,884.3 518.8,972.9 520.0,975.4 C521.5,978.3 522.9,977.6 524.4,979.8 C525.5,981.4 526.5,985.6 527.6,985.6 C529.0,985.6 530.3,884.3 531.7,884.3 C533.1,884.3 534.4,975.8 535.8,976.8 C537.1,977.8 538.5,977.3 539.8,978.3 C541.0,979.2 542.3,985.1 543.5,985.6 C544.7,986.1 545.9,986.4 547.1,986.4 C548.4,986.4 549.8,886.5 551.1,886.5 C552.4,886.5 553.6,975.4 554.9,975.4 C556.1,975.4 557.4,891.6 558.6,891.6 C559.9,891.6 561.3,979.8 562.6,979.8 C563.9,979.8 565.2,888.7 566.5,888.7 C567.7,888.7 569.0,981.2 570.2,982.0 C571.6,982.9 572.9,983.4 574.3,983.4 C575.6,983.4 577.0,841.0 578.3,841.0 C579.5,841.0 580.8,985.1 582.0,985.6 C583.4,986.1 584.7,986.4 586.1,986.4 C587.3,986.4 588.5,982.0 589.7,982.0 C591.0,982.0 592.4,990.8 593.7,990.8 C595.1,990.8 596.4,882.8 597.8,882.8 C599.0,882.8 600.3,971.4 601.5,976.8 C602.8,982.7 604.2,985.6 605.5,985.6 C606.9,985.6 608.2,876.9 609.6,876.9 C610.6,876.9 611.5,878.9 612.5,882.8 C613.9,888.4 615.2,981.5 616.6,984.2 C618.1,987.1 619.5,988.6 621.0,988.6 C622.5,988.6 623.9,986.5 625.4,984.9 C627.5,982.7 629.6,976.1 631.7,976.1 C633.3,976.1 634.8,983.4 636.4,983.4 C637.7,983.4 639.1,905.6 640.4,905.6 C641.6,905.6 642.9,979.8 644.1,979.8 C645.5,979.8 646.8,880.6 648.2,880.6 C649.4,880.6 650.7,982.0 651.9,982.0 C653.4,982.0 654.8,977.6 656.3,977.6 C657.5,977.6 658.7,979.8 659.9,979.8 C661.1,979.8 662.4,978.3 663.6,978.3 C664.9,978.3 666.3,986.4 667.6,986.4 C668.9,986.4 670.1,983.2 671.4,976.8 C672.7,970.1 674.1,796.2 675.4,796.2 C676.5,796.2 677.6,978.7 678.7,979.8 C680.1,981.3 681.6,982.0 683.0,982.0 C684.4,982.0 685.7,891.6 687.1,891.6 C688.3,891.6 689.6,995.2 690.8,995.2 C693.5,995.2 696.2,992.5 698.9,987.1 C700.1,984.7 701.3,894.4 702.5,885.8 C703.7,876.9 705.0,872.5 706.2,872.5 C707.7,872.5 709.1,977.5 710.6,979.8 C713.1,983.7 715.5,985.6 718.0,985.6 C719.2,985.6 720.4,983.4 721.6,983.4 C723.1,983.4 724.5,987.1 726.0,987.1 C727.2,987.1 728.5,983.4 729.7,983.4 C731.0,983.4 732.2,986.4 733.5,986.4 C734.8,986.4 736.2,979.8 737.5,979.8 C738.8,979.8 740.2,992.3 741.5,992.3 C742.9,992.3 744.2,986.4 745.6,986.4 C746.8,986.4 748.0,986.4 749.2,986.4 C750.4,986.4 751.7,893.1 752.9,893.1 C754.1,893.1 755.4,976.5 756.6,979.8 C758.1,983.7 759.5,985.6 761.0,985.6 C762.2,985.6 763.5,889.4 764.7,889.4 C765.9,889.4 767.1,961.2 768.3,966.5 C769.6,972.4 771.0,975.4 772.3,975.4 C773.6,975.4 774.8,889.4 776.1,889.4 C777.4,889.4 778.8,978.7 780.1,982.7 C781.4,986.6 782.7,988.6 784.0,988.6 C786.6,988.6 789.2,783.7 791.8,783.7 C793.3,783.7 794.7,984.7 796.2,986.4 C797.4,987.9 798.7,988.6 799.9,988.6 C801.1,988.6 802.4,888.7 803.6,888.7 C804.9,888.7 806.2,992.3 807.5,992.3 C808.9,992.3 810.3,983.0 811.7,979.8 C812.9,977.1 814.1,977.8 815.3,973.9 C816.5,969.9 817.8,884.3 819.0,884.3 C820.2,884.3 821.5,982.0 822.7,982.0 C824.2,982.0 825.6,982.0 827.1,982.0 C828.3,982.0 829.6,886.5 830.8,886.5 C832.0,886.5 833.2,980.5 834.4,980.5 C835.7,980.5 837.1,791.0 838.4,791.0 C839.8,791.0 841.1,970.1 842.5,975.4 C843.6,979.8 844.8,982.0 845.9,982.0 C847.1,982.0 848.3,886.2 849.5,885.0 C851.0,883.5 852.5,882.8 854.0,882.8 C855.2,882.8 856.4,979.8 857.6,979.8 C859.0,979.8 860.3,880.6 861.7,880.6 C863.0,880.6 864.4,977.6 865.7,977.6 C867.0,977.6 868.4,872.5 869.7,872.5 C871.1,872.5 872.4,890.1 873.8,901.9 C876.2,922.9 878.7,984.2 881.1,984.2 C882.5,984.2 883.8,891.6 885.2,891.6 C886.4,891.6 887.7,985.6 888.9,985.6 C890.2,985.6 891.6,890.6 892.9,885.8 C894.1,881.3 895.4,879.1 896.6,879.1 C897.8,879.1 899.0,985.6 900.2,985.6 C901.7,985.6 903.1,791.0 904.6,791.0 C905.8,791.0 907.1,982.7 908.3,982.7 C909.6,982.7 911.0,900.4 912.3,900.4 C913.6,900.4 914.8,979.8 916.1,979.8 C917.4,979.8 918.8,899.1 920.1,891.6 C921.4,884.3 922.7,880.6 924.0,880.6 C925.4,880.6 926.7,882.8 928.1,887.2 C929.3,891.2 930.6,984.2 931.8,984.2 C933.3,984.2 934.7,981.7 936.2,976.8 C937.3,973.0 938.5,876.2 939.6,876.2 C940.8,876.2 941.9,986.4 943.1,986.4 C945.0,986.4 946.9,985.7 948.8,985.3 C950.9,984.8 952.9,984.7 955.0,983.6 C956.3,982.9 957.7,880.3 959.0,880.3 C960.1,880.3 961.3,882.8 962.4,887.7 C963.7,893.5 965.1,981.9 966.4,981.9 C967.9,981.9 969.4,979.6 970.9,979.6 C972.2,979.6 973.6,981.2 974.9,982.5 C976.0,983.6 977.0,985.1 978.1,986.4 L978.1,1092 L387.9,1092 Z" fill="rgba(77,168,157,0.2)"/>
<path d="M387.9,885.0 C389.2,917.8 390.5,983.4 391.8,983.4 C393.2,983.4 394.5,975.4 395.9,975.4 C397.2,975.4 398.5,977.6 399.8,977.6 C401.0,977.6 402.3,975.4 403.5,975.4 C404.7,975.4 406.0,980.5 407.2,980.5 C408.7,980.5 410.1,979.8 411.6,979.8 C412.8,979.8 414.1,986.4 415.3,986.4 C416.5,986.4 417.7,976.7 418.9,973.9 C420.1,971.0 421.4,969.5 422.6,969.5 C424.0,969.5 425.3,983.4 426.7,983.4 C428.0,983.4 429.4,975.4 430.7,975.4 C432.0,975.4 433.3,988.6 434.6,988.6 C436.0,988.6 437.4,980.3 438.8,963.6 C440.2,947.3 441.5,882.8 442.9,882.8 C444.0,882.8 445.0,887.7 446.1,897.5 C447.5,910.1 448.8,983.4 450.2,983.4 C451.5,983.4 452.9,973.9 454.2,973.9 C455.4,973.9 456.6,975.4 457.8,975.4 C459.0,975.4 460.3,891.6 461.5,891.6 C462.7,891.6 464.0,984.2 465.2,984.2 C466.6,984.2 467.9,977.6 469.3,977.6 C470.6,977.6 472.0,987.1 473.3,987.1 C474.6,987.1 475.9,893.8 477.2,893.8 C478.5,893.8 479.8,974.6 481.1,975.4 C483.6,976.9 486.2,977.6 488.7,977.6 C490.1,977.6 491.4,882.1 492.8,882.1 C494.1,882.1 495.5,987.1 496.8,987.1 C498.1,987.1 499.3,787.3 500.6,787.3 C501.8,787.3 502.9,982.0 504.1,982.0 C505.6,982.0 507.0,973.9 508.5,973.9 C509.8,973.9 511.0,981.2 512.3,981.2 C513.6,981.2 515.0,884.3 516.3,884.3 C517.5,884.3 518.8,972.9 520.0,975.4 C521.5,978.3 522.9,977.6 524.4,979.8 C525.5,981.4 526.5,985.6 527.6,985.6 C529.0,985.6 530.3,884.3 531.7,884.3 C533.1,884.3 534.4,975.8 535.8,976.8 C537.1,977.8 538.5,977.3 539.8,978.3 C541.0,979.2 542.3,985.1 543.5,985.6 C544.7,986.1 545.9,986.4 547.1,986.4 C548.4,986.4 549.8,886.5 551.1,886.5 C552.4,886.5 553.6,975.4 554.9,975.4 C556.1,975.4 557.4,891.6 558.6,891.6 C559.9,891.6 561.3,979.8 562.6,979.8 C563.9,979.8 565.2,888.7 566.5,888.7 C567.7,888.7 569.0,981.2 570.2,982.0 C571.6,982.9 572.9,983.4 574.3,983.4 C575.6,983.4 577.0,841.0 578.3,841.0 C579.5,841.0 580.8,985.1 582.0,985.6 C583.4,986.1 584.7,986.4 586.1,986.4 C587.3,986.4 588.5,982.0 589.7,982.0 C591.0,982.0 592.4,990.8 593.7,990.8 C595.1,990.8 596.4,882.8 597.8,882.8 C599.0,882.8 600.3,971.4 601.5,976.8 C602.8,982.7 604.2,985.6 605.5,985.6 C606.9,985.6 608.2,876.9 609.6,876.9 C610.6,876.9 611.5,878.9 612.5,882.8 C613.9,888.4 615.2,981.5 616.6,984.2 C618.1,987.1 619.5,988.6 621.0,988.6 C622.5,988.6 623.9,986.5 625.4,984.9 C627.5,982.7 629.6,976.1 631.7,976.1 C633.3,976.1 634.8,983.4 636.4,983.4 C637.7,983.4 639.1,905.6 640.4,905.6 C641.6,905.6 642.9,979.8 644.1,979.8 C645.5,979.8 646.8,880.6 648.2,880.6 C649.4,880.6 650.7,982.0 651.9,982.0 C653.4,982.0 654.8,977.6 656.3,977.6 C657.5,977.6 658.7,979.8 659.9,979.8 C661.1,979.8 662.4,978.3 663.6,978.3 C664.9,978.3 666.3,986.4 667.6,986.4 C668.9,986.4 670.1,983.2 671.4,976.8 C672.7,970.1 674.1,796.2 675.4,796.2 C676.5,796.2 677.6,978.7 678.7,979.8 C680.1,981.3 681.6,982.0 683.0,982.0 C684.4,982.0 685.7,891.6 687.1,891.6 C688.3,891.6 689.6,995.2 690.8,995.2 C693.5,995.2 696.2,992.5 698.9,987.1 C700.1,984.7 701.3,894.4 702.5,885.8 C703.7,876.9 705.0,872.5 706.2,872.5 C707.7,872.5 709.1,977.5 710.6,979.8 C713.1,983.7 715.5,985.6 718.0,985.6 C719.2,985.6 720.4,983.4 721.6,983.4 C723.1,983.4 724.5,987.1 726.0,987.1 C727.2,987.1 728.5,983.4 729.7,983.4 C731.0,983.4 732.2,986.4 733.5,986.4 C734.8,986.4 736.2,979.8 737.5,979.8 C738.8,979.8 740.2,992.3 741.5,992.3 C742.9,992.3 744.2,986.4 745.6,986.4 C746.8,986.4 748.0,986.4 749.2,986.4 C750.4,986.4 751.7,893.1 752.9,893.1 C754.1,893.1 755.4,976.5 756.6,979.8 C758.1,983.7 759.5,985.6 761.0,985.6 C762.2,985.6 763.5,889.4 764.7,889.4 C765.9,889.4 767.1,961.2 768.3,966.5 C769.6,972.4 771.0,975.4 772.3,975.4 C773.6,975.4 774.8,889.4 776.1,889.4 C777.4,889.4 778.8,978.7 780.1,982.7 C781.4,986.6 782.7,988.6 784.0,988.6 C786.6,988.6 789.2,783.7 791.8,783.7 C793.3,783.7 794.7,984.7 796.2,986.4 C797.4,987.9 798.7,988.6 799.9,988.6 C801.1,988.6 802.4,888.7 803.6,888.7 C804.9,888.7 806.2,992.3 807.5,992.3 C808.9,992.3 810.3,983.0 811.7,979.8 C812.9,977.1 814.1,977.8 815.3,973.9 C816.5,969.9 817.8,884.3 819.0,884.3 C820.2,884.3 821.5,982.0 822.7,982.0 C824.2,982.0 825.6,982.0 827.1,982.0 C828.3,982.0 829.6,886.5 830.8,886.5 C832.0,886.5 833.2,980.5 834.4,980.5 C835.7,980.5 837.1,791.0 838.4,791.0 C839.8,791.0 841.1,970.1 842.5,975.4 C843.6,979.8 844.8,982.0 845.9,982.0 C847.1,982.0 848.3,886.2 849.5,885.0 C851.0,883.5 852.5,882.8 854.0,882.8 C855.2,882.8 856.4,979.8 857.6,979.8 C859.0,979.8 860.3,880.6 861.7,880.6 C863.0,880.6 864.4,977.6 865.7,977.6 C867.0,977.6 868.4,872.5 869.7,872.5 C871.1,872.5 872.4,890.1 873.8,901.9 C876.2,922.9 878.7,984.2 881.1,984.2 C882.5,984.2 883.8,891.6 885.2,891.6 C886.4,891.6 887.7,985.6 888.9,985.6 C890.2,985.6 891.6,890.6 892.9,885.8 C894.1,881.3 895.4,879.1 896.6,879.1 C897.8,879.1 899.0,985.6 900.2,985.6 C901.7,985.6 903.1,791.0 904.6,791.0 C905.8,791.0 907.1,982.7 908.3,982.7 C909.6,982.7 911.0,900.4 912.3,900.4 C913.6,900.4 914.8,979.8 916.1,979.8 C917.4,979.8 918.8,899.1 920.1,891.6 C921.4,884.3 922.7,880.6 924.0,880.6 C925.4,880.6 926.7,882.8 928.1,887.2 C929.3,891.2 930.6,984.2 931.8,984.2 C933.3,984.2 934.7,981.7 936.2,976.8 C937.3,973.0 938.5,876.2 939.6,876.2 C940.8,876.2 941.9,986.4 943.1,986.4 C945.0,986.4 946.9,985.7 948.8,985.3 C950.9,984.8 952.9,984.7 955.0,983.6 C956.3,982.9 957.7,880.3 959.0,880.3 C960.1,880.3 961.3,882.8 962.4,887.7 C963.7,893.5 965.1,981.9 966.4,981.9 C967.9,981.9 969.4,979.6 970.9,979.6 C972.2,979.6 973.6,981.2 974.9,982.5 C976.0,983.6 977.0,985.1 978.1,986.4" fill="none" stroke="#4aa89c" stroke-width="2" stroke-linejoin="round"/>
<text x="383" y="810.5" class="ax" text-anchor="end">2.5 %</text>
<rect x="386" y="806.4" width="2" height="1" fill="#ccc"/>
<text x="383" y="867.5" class="ax" text-anchor="end">2.0 %</text>
<rect x="386" y="863.4" width="2" height="1" fill="#ccc"/>
<text x="383" y="924.5" class="ax" text-anchor="end">1.5 %</text>
<rect x="386" y="920.4" width="2" height="1" fill="#ccc"/>
<text x="383" y="981.5" class="ax" text-anchor="end">1.0 %</text>
<rect x="386" y="977.4" width="2" height="1" fill="#ccc"/>
<text x="383" y="1038.5" class="ax" text-anchor="end">0.5 %</text>
<rect x="386" y="1034.4" width="2" height="1" fill="#ccc"/>
<text x="383" y="1095.5" class="ax" text-anchor="end">0.0 %</text>
<rect x="386" y="1091.4" width="2" height="1" fill="#ccc"/>
<text x="407.7" y="1106" class="ax" text-anchor="middle">4/14, 07:00</text>
<text x="604.7" y="1106" class="ax" text-anchor="middle">4/14, 08:00</text>
<text x="801.7" y="1106" class="ax" text-anchor="middle">4/14, 09:00</text>
<rect x="367.5" y="1283.5" width="607" height="55.8" fill="#4caf50"/>
<rect x="974.5" y="1311.3" width="8.5" height="1" fill="#e0e0e0"/>
<rect x="367.0" y="1344.7" width="1.6" height="5.6" fill="#9a9a9a"/>
<text x="367.8" y="1363.7" class="ax" text-anchor="middle">4/14, 06:54</text>
<rect x="423.0" y="1344.7" width="1.6" height="5.6" fill="#9a9a9a"/>
<text x="423.8" y="1363.7" class="ax" text-anchor="middle">4/14, 07:10</text>
<rect x="479.0" y="1344.7" width="1.6" height="5.6" fill="#9a9a9a"/>
<text x="479.8" y="1363.7" class="ax" text-anchor="middle">4/14, 07:27</text>
<rect x="535.0" y="1344.7" width="1.6" height="5.6" fill="#9a9a9a"/>
<text x="535.8" y="1363.7" class="ax" text-anchor="middle">4/14, 07:44</text>
<rect x="591.0" y="1344.7" width="1.6" height="5.6" fill="#9a9a9a"/>
<text x="591.8" y="1363.7" class="ax" text-anchor="middle">4/14, 08:00</text>
<rect x="647.1" y="1344.7" width="1.6" height="5.6" fill="#9a9a9a"/>
<text x="647.9" y="1363.7" class="ax" text-anchor="middle">4/14, 08:17</text>
<rect x="703.1" y="1344.7" width="1.6" height="5.6" fill="#9a9a9a"/>
<text x="703.9" y="1363.7" class="ax" text-anchor="middle">4/14, 08:34</text>
<rect x="759.1" y="1344.7" width="1.6" height="5.6" fill="#9a9a9a"/>
<text x="759.9" y="1363.7" class="ax" text-anchor="middle">4/14, 08:50</text>
<rect x="815.1" y="1344.7" width="1.6" height="5.6" fill="#9a9a9a"/>
<text x="815.9" y="1363.7" class="ax" text-anchor="middle">4/14, 09:07</text>
<rect x="871.1" y="1344.7" width="1.6" height="5.6" fill="#9a9a9a"/>
<text x="871.9" y="1363.7" class="ax" text-anchor="middle">4/14, 09:24</text>
<rect x="927.1" y="1344.7" width="1.6" height="5.6" fill="#9a9a9a"/>
<text x="927.9" y="1363.7" class="ax" text-anchor="middle">4/14, 09:40</text>
</svg>
</div></body></html>
